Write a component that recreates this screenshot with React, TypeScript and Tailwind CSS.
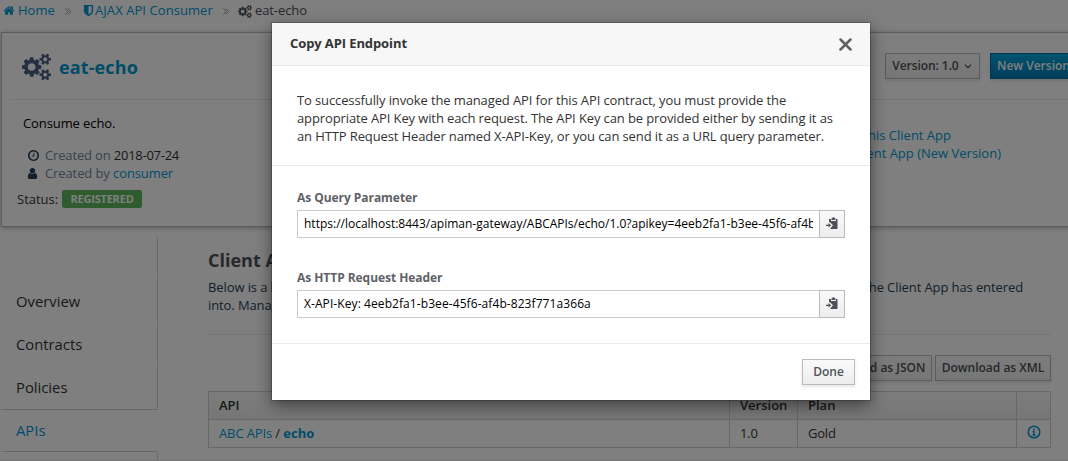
import React from "react";

const COGS =
  "M896 896q0-106-75-181t-181-75-181 75-75 181 75 181 181 75 181-75 75-181zm768 512q0-52-38-90t-90-38-90 38-38 90q0 53 37.5 90.5t90.5 37.5 90.5-37.5 37.5-90.5zm0-1024q0-52-38-90t-90-38-90 38-38 90q0 53 37.5 90.5t90.5 37.5 90.5-37.5 37.5-90.5zm-384 421v185q0 10-7 19.5t-16 10.5l-155 24q-11 35-32 76 34 48 90 115 7 11 7 20 0 12-7 19-23 30-82.5 89.5t-78.5 59.5q-11 0-21-7l-115-90q-37 19-77 31-11 108-23 155-7 24-30 24h-186q-11 0-20-7.5t-10-17.5l-23-153q-34-10-75-31l-118 89q-7 7-20 7-11 0-21-8-144-133-144-160 0-9 7-19 10-14 41-53t47-61q-23-44-35-82l-152-24q-10-1-17-9.5t-7-19.5v-185q0-10 7-19.5t16-10.5l155-24q11-35 32-76-34-48-90-115-7-11-7-20 0-12 7-20 22-30 82-89t79-59q11 0 21 7l115 90q34-18 77-32 11-108 23-154 7-24 30-24h186q11 0 20 7.5t10 17.5l23 153q34 10 75 31l118-89q8-7 20-7 11 0 21 8 144 133 144 160 0 8-7 19-12 16-42 54t-45 60q23 48 34 82l152 23q10 2 17 10.5t7 19.5zm640 533v140q0 16-149 31-12 27-30 52 51 113 51 138 0 4-4 7-122 71-124 71-8 0-46-47t-52-68q-20 2-30 2t-30-2q-14 21-52 68t-46 47q-2 0-124-71-4-3-4-7 0-25 51-138-18-25-30-52-149-15-149-31v-140q0-16 149-31 13-29 30-52-51-113-51-138 0-4 4-7 4-2 35-20t59-34 30-16q8 0 46 46.5t52 67.5q20-2 30-2t30 2q51-71 92-112l6-2q4 0 124 70 4 3 4 7 0 25-51 138 17 23 30 52 149 15 149 31zm0-1024v140q0 16-149 31-12 27-30 52 51 113 51 138 0 4-4 7-122 71-124 71-8 0-46-47t-52-68q-20 2-30 2t-30-2q-14 21-52 68t-46 47q-2 0-124-71-4-3-4-7 0-25 51-138-18-25-30-52-149-15-149-31v-140q0-16 149-31 13-29 30-52-51-113-51-138 0-4 4-7 4-2 35-20t59-34 30-16q8 0 46 46.5t52 67.5q20-2 30-2t30 2q51-71 92-112l6-2q4 0 124 70 4 3 4 7 0 25-51 138 17 23 30 52 149 15 149 31z";
const HOME =
  "M1472 992v480q0 26-19 45t-45 19h-384v-384h-256v384h-384q-26 0-45-19t-19-45v-480q0-1 .5-3t.5-3l575-474 575 474q1 2 1 6zm223-69l-62 74q-8 9-21 11h-3q-13 0-21-7l-692-577-692 577q-12 8-24 7-13-2-21-11l-62-74q-8-10-7-23.5t11-21.5l719-599q32-26 76-26t76 26l244 204v-195q0-14 9-23t23-9h192q14 0 23 9t9 23v408l219 182q10 8 11 21.5t-7 23.5z";
const SHIELD =
  "M1344 960v-640h-448v1137q119-63 213-137 235-184 235-360zm192-768v768q0 86-33.5 170.5t-83 150-118 127.5-126.5 103-121 77.5-89.5 49.5-42.5 20q-12 6-26 6t-26-6q-16-7-42.5-20t-89.5-49.5-121-77.5-126.5-103-118-127.5-83-150-33.5-170.5v-768q0-26 19-45t45-19h1152q26 0 45 19t19 45z";
const CLOCK =
  "M1024 544v448q0 14-9 23t-23 9h-320q-14 0-23-9t-9-23v-64q0-14 9-23t23-9h224v-352q0-14 9-23t23-9h64q14 0 23 9t9 23zm416 352q0-148-73-273t-198-198-273-73-273 73-198 198-73 273 73 273 198 198 273 73 273-73 198-198 73-273zm224 0q0 209-103 385.5t-279.5 279.5-385.5 103-385.5-103-279.5-279.5-103-385.5 103-385.5 279.5-279.5 385.5-103 385.5 103 279.5 279.5 103 385.5z";
const USER =
  "M1536 1399q0 109-62.5 187t-150.5 78h-854q-88 0-150.5-78t-62.5-187q0-85 8.5-160.5t31.5-152 58.5-131 94-89 134.5-34.5q131 128 313 128t313-128q76 0 134.5 34.5t94 89 58.5 131 31.5 152 8.5 160.5zm-256-887q0 159-112.5 271.5t-271.5 112.5-271.5-112.5-112.5-271.5 112.5-271.5 271.5-112.5 271.5 112.5 112.5 271.5z";

function Icon({ d, box = "0 0 1792 1792", className }: { d: string; box?: string; className: string }) {
  return (
    <svg viewBox={box} className={`shrink-0 ${className}`} fill="currentColor">
      <path d={d} />
    </svg>
  );
}

function Chevrons({ className }: { className: string }) {
  return (
    <svg viewBox="0 0 6 7" className={`h-[7px] w-[6px] shrink-0 ${className}`} fill="none" stroke="#9c9c9c">
      <path d="M.5.5l2.500 3-2.500 3M3 .5l2.500 3-2.500 3" />
    </svg>
  );
}

function PasteIcon() {
  return (
    <svg viewBox="0 0 12 12" className="h-3 w-3" fill="#4d5258">
      <path d="M3 2h2v2h5V2h1.500v10H4.500v-1l2.500-2.800L4 5.200H3z" />
      <path d="M5.500 1.200h1V.3h2v.9h1V3h-4z" />
      <path d="M0 7.700h2.500V6L5.200 8.300l-2.700 2.300V8.900H0z" />
    </svg>
  );
}

const BUTTON =
  "flex h-[26px] items-center justify-center border border-[#bbb] bg-linear-to-b from-[#fafafa] to-[#ededed] text-[12px] font-semibold whitespace-nowrap text-[#4d5258] shadow-[0_2px_3px_rgba(3,3,3,0.1)]";

function Breadcrumb() {
  return (
    <nav className="flex h-[32px] items-start pl-[3px] leading-[21px] text-[#0099d3]">
      <Icon d={HOME} className="mt-[4px] h-[13px] w-[12px]" />
      <span className="ml-[3px] w-[38px]">Home</span>
      <Chevrons className="mt-[8px] ml-[9px]" />
      <Icon d={SHIELD} className="mt-[4px] ml-[11px] h-[13px] w-[13px]" />
      <span className="w-[118px] tracking-[0.07px] whitespace-nowrap">AJAX API Consumer</span>
      <Chevrons className="mt-[8px] ml-[10px]" />
      <Icon d={COGS} box="0 0 1920 1792" className="mt-[5px] ml-[9px] h-[13px] w-[14px] text-[#4d5258]" />
      <span className="ml-[3px] tracking-[-0.1px] text-[#4d5258]">eat-echo</span>
    </nav>
  );
}

function EntityCard() {
  return (
    <section className="ml-px h-[195px] w-[1180px] shrink-0 border border-[#bbb] bg-white shadow-[0_1px_5px_rgba(3,3,3,0.3)]">
      <div className="ml-[8px] flex h-[67px] border-b border-[#eaeaea] pl-[12px]">
        <Icon d={COGS} box="0 0 1920 1792" className="mt-[20px] h-[28px] w-[29px] text-[#4d6080]" />
        <h1 className="mt-[21px] ml-[8px] w-[826px] text-[18px] leading-[27px] font-bold tracking-[0.12px] text-[#0099d3]">
          eat-echo
        </h1>
        <div className={`${BUTTON} mt-[20px] w-[95px] gap-[5px] pr-px`}>
          <span className="tracking-[-0.07px]">Version: 1.0</span>
          <svg viewBox="0 0 8 5" className="mt-px h-[5px] w-2" fill="none" stroke="#4d5258" strokeWidth="1.2">
            <path d="M1 .7l3 3 3-3" />
          </svg>
        </div>
        <div className="mt-[20px] ml-[10px] flex h-[26px] w-[92px] items-center border border-[#006e9c] bg-linear-to-b from-[#00a8e1] to-[#007bb5] pl-[6px] text-[12px] font-semibold text-white shadow-[0_2px_3px_rgba(3,3,3,0.1)]">
          New Version
        </div>
      </div>
      <div className="flex">
        <div className="w-[790px] leading-[18px]">
          <p className="mt-[14px] ml-[21px] tracking-[-0.1px] text-black">Consume echo.</p>
          <p className="mt-[14px] ml-[25px] flex items-center">
            <Icon d={CLOCK} className="mt-[1px] h-[13px] w-[13px] text-[#2a3f55]" />
            <span className="ml-[5px] tracking-[-0.15px] text-[#72879c]">Created on&nbsp;</span>
            <span className="tracking-[-0.26px] text-[#333]">2018-07-24</span>
          </p>
          <p className="ml-[25px] flex items-center">
            <Icon d={USER} className="mt-[1px] mr-px ml-[-1px] h-[13px] w-[13px] text-[#2a3f55]" />
            <span className="ml-[5px] tracking-[-0.1px] text-[#72879c]">Created by&nbsp;</span>
            <span className="tracking-[-0.1px] text-[#0099d3]">consumer</span>
          </p>
          <p className="mt-[8px] ml-[15px] flex items-center text-[#333]">
            <span className="w-[45px]">Status:</span>
            <span className="flex h-[18px] w-[80px] items-center justify-center rounded-[2px] bg-[#5cb85c] text-[11px] font-bold tracking-[-0.2px] text-white">
              REGISTERED
            </span>
          </p>
        </div>
        <div className="mt-[26px] text-[#0099d3]">
          <div className="w-[159px] text-right leading-[18px] whitespace-nowrap">Delete This Client App</div>
          <div className="flex w-[209px] justify-end leading-[18px] whitespace-nowrap">Create Client App (New Version)</div>
        </div>
      </div>
    </section>
  );
}

function Sidebar() {
  return (
    <aside className="mt-[10px] w-[158px] shrink-0 text-[14.8px] text-[#333]">
      <div className="mb-px h-[42px] border-r border-[#d0d0d0]" />
      {["Overview", "Contracts", "Policies"].map((label) => (
        <div key={label} className="mb-px flex h-[42px] items-center border-r border-[#d0d0d0] pl-[16px]">
          {label}
        </div>
      ))}
      <div className="ml-px flex h-[43px] items-center border-y border-[#d0d0d0] pl-[15px] text-[#0099d3]">APIs</div>
      <div className="mt-px h-[43px] border-r border-[#d0d0d0]" />
    </aside>
  );
}

function Contracts() {
  return (
    <main className="ml-[50px] w-[843px] shrink-0 text-[#2a3f55]">
      <h2 className="mt-[20px] text-[18px] leading-[27px] font-bold text-[#4d5258]">Client App APIs</h2>
      <p className="mt-[4px] flex h-[36px] justify-between pr-[28px] leading-[18px] tracking-[-0.1px] whitespace-nowrap">
        <span>
          Below is a list of all the API contracts
          <br />
          into. Manage them from the list.
        </span>
        <span>that the Client App has entered</span>
      </p>
      <div className="mt-[20px] border-t border-[#eaeaea]" />
      <div className="mt-[20px] flex justify-end gap-[3px]">
        <div className={`${BUTTON} w-[120px]`}>Download as JSON</div>
        <div className={`${BUTTON} w-[116px]`}>Download as XML</div>
      </div>
      <div className="mt-[10px] grid grid-cols-[521px_68px_219px_34px] border-t border-l border-[#d1d1d1] text-[#333] *:border-r *:border-b *:border-[#d1d1d1]">
        {["API", "Version", "Plan", ""].map((label, index) => (
          <div
            key={index}
            className="flex h-[28px] items-center bg-linear-to-b from-[#fafafa] to-[#ededed] pl-[10px] font-semibold"
          >
            {label}
          </div>
        ))}
        <div className="flex h-[28px] items-center pl-[10px] tracking-[-0.12px]">
          <span className="text-[#0099d3]">ABC APIs</span>
          <span>&nbsp;/&nbsp;</span>
          <b className="tracking-normal text-[#0099d3]">echo</b>
        </div>
        <div className="flex items-center pl-[10px] tracking-[-0.2px]">1.0</div>
        <div className="flex items-center pl-[10px] tracking-[-0.2px]">Gold</div>
        <div className="flex items-center justify-center">
          <svg viewBox="0 0 14 14" className="mb-[3px] h-[14px] w-[14px]" fill="none" stroke="#0099d3">
            <circle cx="7" cy="7" r="5.800" strokeWidth="1.500" />
            <path d="M7 3.300v1.900M5.500 6.500H7v3M5.500 10h3" strokeWidth="1.400" />
          </svg>
        </div>
      </div>
    </main>
  );
}

function CopyField({ label, value, valueClass = "" }: { label: string; value: string; valueClass?: string }) {
  return (
    <div className="h-[80px]">
      <div className="h-[22px] text-[12px] leading-[19px] font-bold tracking-[-0.05px] text-[#5e6267]">{label}</div>
      <div className="flex h-[28px]">
        <div className="flex w-[522px] items-center border border-r-0 border-[#ccc] px-[6px] text-[12px] text-black">
          <span className={`w-full overflow-hidden whitespace-nowrap ${valueClass}`}>{value}</span>
        </div>
        <div className="flex w-[26px] items-center justify-center border border-[#bbb] bg-linear-to-b from-[#fafafa] to-[#ededed] pb-[2px]">
          <PasteIcon />
        </div>
      </div>
    </div>
  );
}

function Modal() {
  return (
    <div className="h-[377px] w-[598px] bg-white text-[#333] shadow-[0_0_0_1px_rgba(0,0,0,0.2),0_5px_15px_rgba(0,0,0,0.5)]">
      <header className="flex h-[43px] items-center justify-between border-b border-[#eaeaea] bg-[#f7f7f7] pr-[18px] pl-[18px]">
        <h3 className="text-[13px] font-bold tracking-[-0.1px]">Copy API Endpoint</h3>
        <svg viewBox="0 0 13 13" className="h-[13px] w-[13px]" stroke="#606060" strokeWidth="2.500" strokeLinecap="round">
          <path d="M1.500 1.500l10 10M11.500 1.500l-10 10" />
        </svg>
      </header>
      <p className="h-[100px] border-b border-[#eaeaea] pt-[25px] pl-[25px] leading-[18px] tracking-[-0.115px] whitespace-nowrap">
        To successfully invoke the managed API for this API contract, you must provide the
        <br />
        appropriate API Key with each request. The API Key can be provided either by sending it as
        <br />
        an HTTP Request Header named X-API-Key, or you can send it as a URL query parameter.
      </p>
      <div className="h-[178px] border-b border-[#eaeaea] pt-[22px] pl-[25px]">
        <CopyField
          label="As Query Parameter"
          value="https://localhost:8443/apiman-gateway/ABCAPIs/echo/1.0?apikey=4eeb2fa1-b3ee-45f6-af4b-823f771a366a"
        />
        <CopyField
          label="As HTTP Request Header"
          value="X-API-Key: 4eeb2fa1-b3ee-45f6-af4b-823f771a366a"
          valueClass="tracking-[0.08px]"
        />
      </div>
      <footer className="flex justify-end pt-[15px] pr-[15px]">
        <button className={`${BUTTON} w-[53px]`}>Done</button>
      </footer>
    </div>
  );
}

export default function App() {
  return (
    <div className="relative h-[461px] w-full overflow-hidden bg-white font-['Open_Sans',sans-serif] text-[13px]">
      <Breadcrumb />
      <EntityCard />
      <div className="flex h-[234px] overflow-hidden border-b border-[#eaeaea]">
        <Sidebar />
        <Contracts />
      </div>
      <div className="absolute inset-0 flex items-start bg-black/50 pt-[23px] pl-[272px]">
        <Modal />
      </div>
    </div>
  );
}
